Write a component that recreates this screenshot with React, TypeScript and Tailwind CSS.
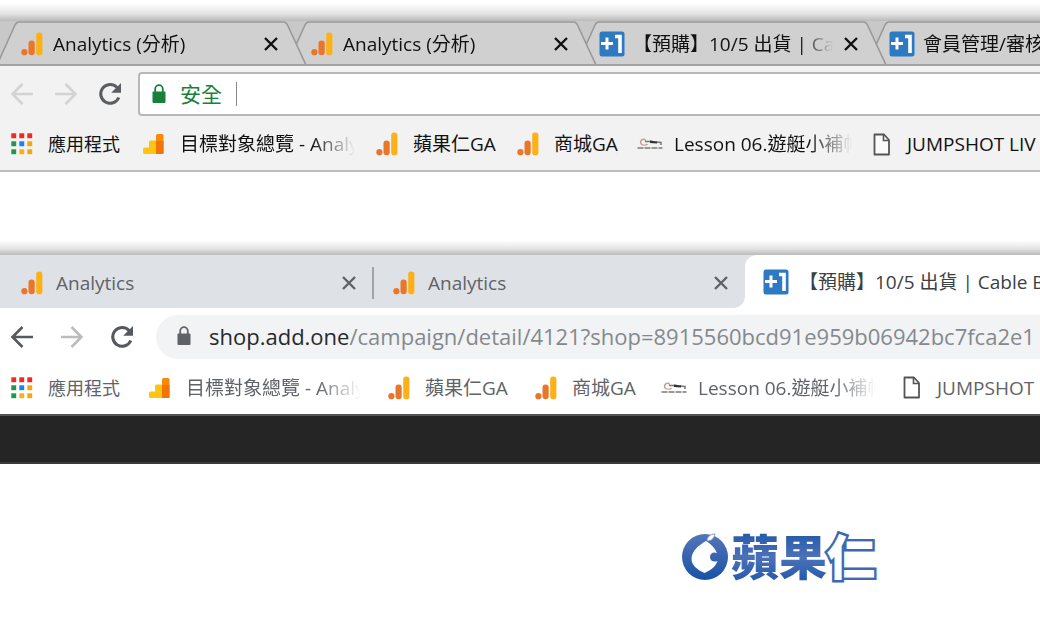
import type { ReactNode } from 'react';

type IconName = 'ga' | 'one' | 'apps' | 'overview' | 'lesson' | 'file';

interface TabItem {
    title: string;
    icon: IconName;
}

interface Bookmark {
    title: string;
    icon: IconName;
    style: string;
}

const classicTabs: TabItem[] = [
    { title: 'Analytics (分析)', icon: 'ga' },
    { title: 'Analytics (分析)', icon: 'ga' },
    { title: '【預購】10/5 出貨 | Cable B', icon: 'one' },
    { title: '會員管理/審核', icon: 'one' },
];

const fade = 'overflow-hidden [mask-image:linear-gradient(to_right,black_75%,transparent)]';

const bookmarks: Bookmark[] = [
    { title: '應用程式', icon: 'apps', style: 'w-[74px] text-[18px]' },
    { title: '目標對象總覽 - Analy', icon: 'overview', style: `w-[175px] text-[19px] ${fade}` },
    { title: '蘋果仁GA', icon: 'ga', style: 'w-[83px] text-[19px]' },
    { title: '商城GA', icon: 'ga', style: 'w-[62px] text-[19px]' },
    { title: 'Lesson 06.遊艇小補帖', icon: 'lesson', style: `w-[178px] text-[19px] ${fade}` },
    { title: 'JUMPSHOT LIV', icon: 'file', style: 'text-[19px]' },
];

const appColors = [
    '#f02a20', '#f02a20', '#f02a20',
    '#219653', '#1683fb', '#f9a50c',
    '#219653', '#fdb010', '#f9a50c',
];

function Icon({ name }: { name: IconName }) {
    if (name === 'ga') {
        return (
            <svg width="22" height="24" viewBox="0 0 22 24" className="shrink-0" aria-hidden="true">
                <circle cx="3.4" cy="20.2" r="3.1" fill="#e8762b" />
                <rect x="7.5" y="8.6" width="6.2" height="14.6" rx="3" fill="#e8762b" />
                <rect x="15.2" y="0.6" width="6.2" height="22.6" rx="2.8" fill="#fbb117" />
            </svg>
        );
    }
    if (name === 'one') {
        return (
            <svg width="26" height="26" viewBox="0 0 26 26" className="shrink-0" aria-hidden="true">
                <rect x="0.5" y="0.5" width="25" height="25" rx="2.5" fill="#2d7ac2" />
                <path d="M8 6.500v12M2 12.500h12" stroke="#fff" strokeWidth="3" />
                <path d="M16 5.500h5V22" fill="none" stroke="#fff" strokeWidth="3.600" />
            </svg>
        );
    }
    if (name === 'apps') {
        return (
            <svg width="22" height="22" viewBox="0 0 22 22" className="shrink-0" aria-hidden="true">
                {appColors.map((color, i) => (
                    <rect key={i} x={(i % 3) * 8 + 0.3} y={Math.floor(i / 3) * 8 + 0.3} width="4.9" height="4.9" fill={color} />
                ))}
            </svg>
        );
    }
    if (name === 'overview') {
        return (
            <svg width="22" height="22" viewBox="0 0 22 22" className="shrink-0" aria-hidden="true">
                <path d="M1.5 14.5H6V9a1.5 1.5 0 0 1 1.5-1.5H14V21H1.500A1.500 1.500 0 0 1 0 19.500V16a1.500 1.500 0 0 1 1.500-1.500z" fill="#fdc414" />
                <path d="M14.500 1H19a1.500 1.500 0 0 1 1.500 1.500v17A1.500 1.500 0 0 1 19 21h-6V2.500A1.500 1.500 0 0 1 14.500 1z" fill="#f98a06" />
                <path d="M13 8h7.500v12a1 1 0 0 1-1 1H13z" fill="#f27405" />
            </svg>
        );
    }
    if (name === 'lesson') {
        return (
            <svg width="26" height="14" viewBox="0 0 26 14" className="shrink-0" aria-hidden="true">
                <path d="M4 7C2.500 3 6 1 9 3.500M4 7c2 1.500 5 1.500 6.500 0" fill="none" stroke="#bd9f97" strokeWidth="1.400" />
                <path d="M8 4.500h7M19 5l5 .500v2.500" fill="none" stroke="#777" strokeWidth="1.500" />
                <path d="M13 3.500l7 1v2l-7-.500z" fill="#333" />
                <path d="M0.500 11h25" stroke="#999" strokeWidth="1.800" strokeDasharray="6 1" />
            </svg>
        );
    }
    return (
        <svg width="18" height="23" viewBox="0 0 18 23" className="shrink-0" aria-hidden="true">
            <path d="M1.500 1.500h9.500l5 5.500v14.500H1.500z" fill="#fff" fillOpacity="0.7" stroke="#555" strokeWidth="1.800" strokeLinejoin="round" />
            <path d="M10.500 1.500v6h5.500" fill="none" stroke="#555" strokeWidth="1.600" />
        </svg>
    );
}

function CloseButton({ label }: { label: string }) {
    return (
        <button type="button" aria-label={label} className="flex size-4 shrink-0 items-center justify-center">
            <svg width="14" height="14" viewBox="0 0 14 14" fill="none" stroke="currentColor" strokeWidth="2.4">
                <path d="M1 1l12 12M13 1L1 13" />
            </svg>
        </button>
    );
}

function NavButton({ label, color, children }: { label: string; color: string; children: ReactNode }) {
    return (
        <button type="button" aria-label={label} className={`size-6 shrink-0 ${color}`}>
            <svg width="24" height="24" viewBox="0 0 24 24" fill="none" stroke="currentColor" strokeWidth="2.600">
                {children}
            </svg>
        </button>
    );
}

const backPath = <path d="M23 12H3M12.500 2L2.500 12l10 10" />;
const forwardPath = <path d="M1 12h20M11.500 2l10 10-10 10" />;
const reloadPath = (
    <>
        <path d="M20.800 15.500a9.400 9.400 0 1 1-2-10.300l2 2" strokeWidth="3" />
        <path d="M23 1v9.800h-9.800z" fill="currentColor" stroke="none" />
    </>
);

function Lock() {
    return (
        <svg width="14" height="20" viewBox="0 0 14 20" className="shrink-0" aria-hidden="true">
            <rect x="0.500" y="7.500" width="13" height="11.500" rx="1" fill="currentColor" />
            <path d="M3.200 8V5a3.800 3.800 0 0 1 7.600 0v3" fill="none" stroke="currentColor" strokeWidth="1.800" />
        </svg>
    );
}

function BookmarkBar({ className }: { className: string }) {
    return (
        <nav aria-label="Bookmarks" className={`flex items-center overflow-hidden pl-[11px] ${className}`}>
            {bookmarks.map((item) => (
                <a key={item.title} href="#" className="flex shrink-0 items-center">
                    <span className={item.icon === 'file' ? 'w-[34px]' : 'w-[37px]'}>
                        <Icon name={item.icon} />
                    </span>
                    <span className={`leading-7 whitespace-nowrap ${item.style}`}>{item.title}</span>
                </a>
            ))}
        </nav>
    );
}

// later tabs sit below the earlier ones, so each slanted edge covers its neighbour
const layers = ['z-40', 'z-30', 'z-20', 'z-10'];

function ClassicWindow() {
    return (
        <section className="text-[#111]">
            <div className="h-[21px] bg-linear-to-b from-white from-15% via-[#e4e4e4] via-65% to-[#bababa]" />
            <div className="isolate flex h-[45px] overflow-hidden border-b-2 border-[#a3a3a3] bg-[#c8c8c8]">
                {classicTabs.map((tab, i) => (
                    <div key={i} className={`relative flex w-[290px] shrink-0 items-center gap-2 pt-0.5 pl-[18px] ${layers[i]}`}>
                        <svg className="absolute top-0 left-0 overflow-visible" width="310" height="44" viewBox="0 0 310 44" aria-hidden="true">
                            <path d="M-3 44L15 4Q16.500 1 19 1H284Q286 1 287.500 4L306 44" fill="#d0d0d0" stroke="#999" strokeWidth="1.600" />
                        </svg>
                        <span className="relative flex w-[27px] shrink-0 justify-center">
                            <Icon name={tab.icon} />
                        </span>
                        <button
                            type="button"
                            className="relative w-[202px] shrink-0 overflow-hidden text-left text-[19px] leading-7 whitespace-nowrap [mask-image:linear-gradient(to_right,black_83%,transparent_99%)]"
                        >
                            {tab.title}
                        </button>
                        <span className="relative">
                            <CloseButton label="Close tab" />
                        </span>
                    </div>
                ))}
            </div>
            <div className="border-b-2 border-[#bcbcbc] bg-[#f2f2f2]">
                <div className="flex items-center pt-1.5 pl-2.5">
                    <div className="flex w-32 shrink-0 gap-5">
                        <NavButton label="Back" color="text-[#d2d3d4]">{backPath}</NavButton>
                        <NavButton label="Forward" color="text-[#d2d3d4]">{forwardPath}</NavButton>
                        <NavButton label="Reload" color="text-[#5a5d61]">{reloadPath}</NavButton>
                    </div>
                    <label className="-mr-2 flex h-11 flex-1 items-center rounded border-2 border-[#b8b8b8] bg-white pl-3 text-[#188038]">
                        <Lock />
                        <span className="ml-3.5 text-[21px] leading-7">安全</span>
                        <span className="ml-3.5 h-6 w-px bg-[#888]" />
                        <input type="text" aria-label="Address" className="h-8 min-w-0 flex-1 px-3 text-[22px] text-black outline-none" />
                    </label>
                </div>
                <BookmarkBar className="h-[54px] gap-[21px] pt-0.5" />
            </div>
        </section>
    );
}

function ModernWindow() {
    return (
        <section className="text-[#5f6368]">
            <div className="h-[21px] bg-linear-to-b from-white from-30% via-[#e4e4e4] via-70% to-[#bababa]" />
            <div className="flex h-[53px] overflow-hidden bg-white">
                <div className="flex shrink-0 items-center rounded-br-xl bg-[#dee1e6] pt-0.5 pr-4">
                    {[0, 1].map((i) => (
                        <div key={i} className={`flex h-8 shrink-0 items-center ${i === 0 ? 'w-[372px] pl-[21px]' : 'w-[357px] border-l-2 border-[#a0a3a8] pl-[19px]'}`}>
                            <Icon name="ga" />
                            <button type="button" className="ml-[13px] w-[285px] text-left text-[19px] leading-7">
                                Analytics
                            </button>
                            <CloseButton label="Close tab" />
                        </div>
                    ))}
                </div>
                <div className="relative min-w-0 flex-1">
                    <span className="absolute top-0 left-0 size-3 bg-[#dee1e6]" />
                    <button
                        type="button"
                        className="relative flex h-full w-full items-center gap-2.5 rounded-tl-xl bg-white pl-[18px] text-[19px] leading-7 whitespace-nowrap text-[#3c4043]"
                    >
                        <Icon name="one" />
                        【預購】10/5 出貨 | Cable B
                    </button>
                </div>
            </div>
            <div className="flex items-center bg-white pt-[7px] pl-2.5">
                <div className="flex w-[146px] shrink-0 gap-[26px]">
                    <NavButton label="Back" color="text-[#55585d]">{backPath}</NavButton>
                    <NavButton label="Forward" color="text-[#babcbe]">{forwardPath}</NavButton>
                    <NavButton label="Reload" color="text-[#55585d]">{reloadPath}</NavButton>
                </div>
                <label className="flex h-11 min-w-0 flex-1 items-center overflow-hidden rounded-l-full bg-[#f1f3f4] pb-0.5 pl-[21px] text-[22px] leading-8">
                    <Lock />
                    <span className="ml-[18px] text-[#27292d]">shop.add.one</span>
                    <input
                        type="text"
                        aria-label="Address"
                        defaultValue="/campaign/detail/4121?shop=8915560bcd91e959b06942bc7fca2e1"
                        className="min-w-0 flex-1 text-[#85898e] outline-none"
                    />
                </label>
            </div>
            <BookmarkBar className="h-[55px] gap-[27px] pt-0.5" />
        </section>
    );
}

function Brand() {
    return (
        <a href="#" className="flex items-center text-[48px] leading-[56px] font-black">
            <svg width="48" height="48" viewBox="0 0 48 48" className="mr-0.5 shrink-0" aria-hidden="true">
                <defs>
                    <linearGradient id="brand" x1="0" y1="0" x2="0" y2="1">
                        <stop offset="0" stopColor="#5376b8" />
                        <stop offset="1" stopColor="#1a52a6" />
                    </linearGradient>
                </defs>
                <circle cx="24" cy="24" r="23" fill="url(#brand)" />
                <path d="M25 8C18 12 10.500 18 10.500 26c0 6 6 11 13 14 7-3 11.500-7 13-12-3.500 1.500-7.500 0-7.500-4s3.500-5.500 7-4c-2-5-6-9-11-12z" fill="#fff" />
                <path d="M26 8c0-4 3-7 8-7-1 4-3 7-8 7z" fill="#fff" stroke="#7d98cb" strokeWidth="1" />
            </svg>
            <span className="bg-linear-to-b from-[#1d55a9] via-[#4b72b8] to-[#1d55a9] bg-clip-text text-transparent">蘋果</span>
            <span className="text-white [-webkit-text-stroke:5px_#3e69b2] [paint-order:stroke_fill]">仁</span>
        </a>
    );
}

export default function App() {
    return (
        <main className="min-h-screen overflow-hidden bg-white font-['Open_Sans','Noto_Sans_CJK_TC',sans-serif]">
            <ClassicWindow />
            <div className="mt-[62px]">
                <ModernWindow />
            </div>
            <div className="h-[50px] border-y-2 border-t-[#555] border-b-[#3a3a3a] bg-[#252525]" />
            {/* shop header */}
            <header className="flex justify-center pt-[65px] pl-[516px]">
                <Brand />
            </header>
        </main>
    );
}
